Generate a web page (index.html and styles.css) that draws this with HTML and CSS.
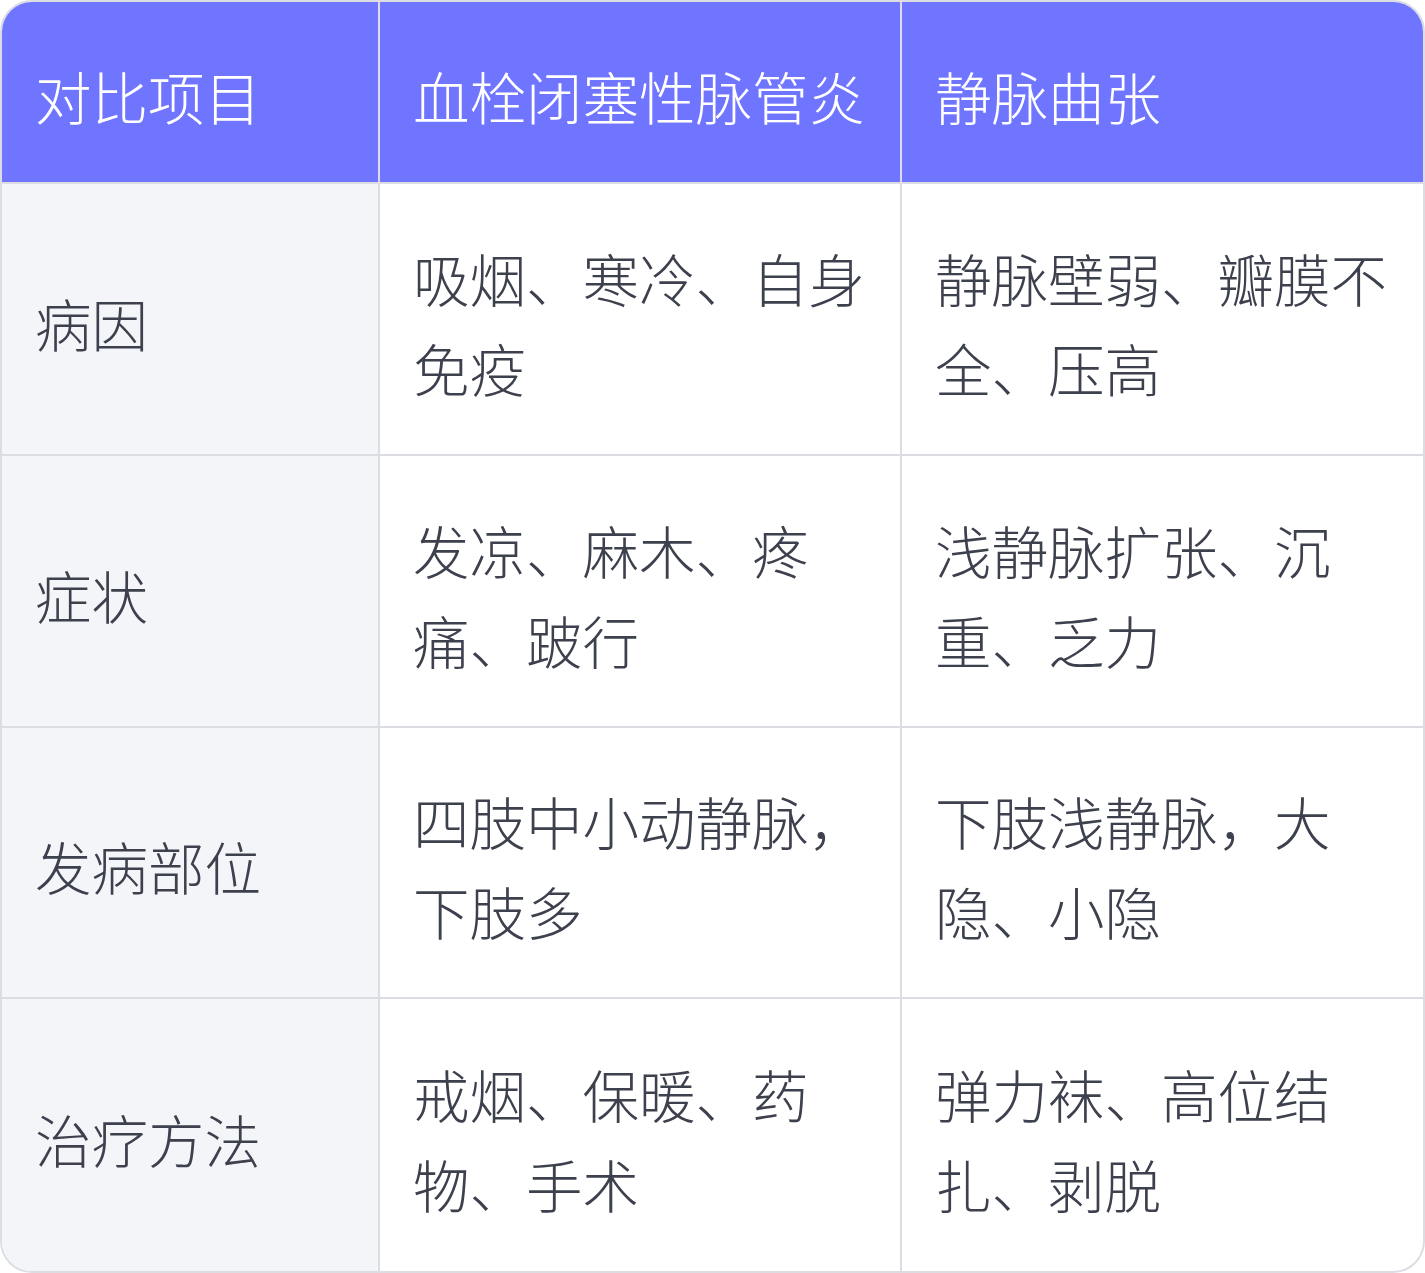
FILE: index.html
```html
<!DOCTYPE html>
<html lang="zh-CN">
<head>
<meta charset="utf-8">
<title>血栓闭塞性脉管炎 vs 静脉曲张</title>
<link rel="stylesheet" href="styles.css">
</head>
<body>
<div class="table">
  <div class="cell head first">对比项目</div>
  <div class="cell head">血栓闭塞性脉管炎</div>
  <div class="cell head last">静脉曲张</div>

  <div class="cell label">病因</div>
  <div class="cell">吸烟、寒冷、自身免疫</div>
  <div class="cell last">静脉壁弱、瓣膜不全、压高</div>

  <div class="cell label">症状</div>
  <div class="cell">发凉、麻木、疼痛、跛行</div>
  <div class="cell last">浅静脉扩张、沉重、乏力</div>

  <div class="cell label">发病部位</div>
  <div class="cell">四肢中小动静脉，下肢多</div>
  <div class="cell last">下肢浅静脉，大隐、小隐</div>

  <div class="cell label bottom">治疗方法</div>
  <div class="cell bottom">戒烟、保暖、药物、手术</div>
  <div class="cell last bottom">弹力袜、高位结扎、剥脱</div>
</div>
</body>
</html>
```
FILE: styles.css
```css
html, body {
  margin: 0;
  padding: 0;
  background: #ffffff;
}
.table {
  width: 1425px;
  height: 1273px;
  box-sizing: border-box;
  border: 2px solid #dcdde3;
  border-radius: 32px;
  overflow: hidden;
  display: grid;
  grid-template-columns: 378px 522px 1fr;
  grid-template-rows: 182px repeat(4, 1fr);
  font-family: "Noto Sans CJK SC", "Noto Sans", sans-serif;
  font-weight: 300;
  font-size: 56.5px;
  line-height: 90px;
  color: #3d404d;
  background: #ffffff;
}
.cell {
  padding: 6px 30px 0 33px;
  display: flex;
  align-items: center;
  border-right: 2px solid #dcdde3;
  border-bottom: 2px solid #dcdde3;
  box-sizing: border-box;
}
.cell.last {
  border-right: none;
}
.cell.bottom {
  border-bottom: none;
}
.head {
  background: #7075ff;
  color: #ffffff;
}
.label {
  background: #f4f5f9;
}
```
